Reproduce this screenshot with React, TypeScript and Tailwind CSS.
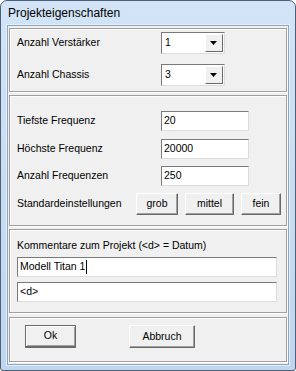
const font = { fontFamily: '"Liberation Sans", Arial, sans-serif' };

const Panel = ({ className, children }: { className: string; children: React.ReactNode }) => (
  <div
    className={
      "mx-px border border-[#a0a0a0] shadow-[inset_1px_1px_0_#ffffff,1px_1px_0_#ffffff] flex flex-col shrink-0 " +
      className
    }
  >
    {children}
  </div>
);

const Field = ({ value, className, caret }: { value: string; className: string; caret?: boolean }) => (
  <div
    className={
      "h-[20px] shrink-0 bg-white border border-t-[#7a7a7a] border-l-[#7a7a7a] border-r-[#dcdcdc] border-b-[#dcdcdc] flex items-center pl-[2px] text-black " +
      className
    }
  >
    {value}
    {caret && <span className="ml-px inline-block w-px h-[14px] bg-black" />}
  </div>
);

const Combo = ({ value }: { value: string }) => (
  <div className="w-[64px] h-[22px] bg-white border border-t-[#7a7a7a] border-l-[#7a7a7a] border-r-[#dcdcdc] border-b-[#dcdcdc] flex items-center">
    <span className="flex-1 pl-[3px]">{value}</span>
    <div className="w-[18px] h-[18px] mr-px bg-[#f0f0f0] border border-t-white border-l-white border-r-[#696969] border-b-[#696969] flex items-center justify-center">
      <svg width="8" height="4" viewBox="0 0 8 4">
        <path d="M0 0h7L3.5 4z" fill="#000" />
      </svg>
    </div>
  </div>
);

const Btn = ({ label, className, def }: { label: string; className: string; def?: boolean }) => (
  <div
    className={
      "flex items-center justify-center shrink-0 bg-[#f0f0f0] border " +
      (def
        ? "border-[#696969] border-b-2 shadow-[inset_1px_1px_0_#ffffff,inset_-1px_-1px_0_#a0a0a0] "
        : "border-t-white border-l-white border-r-[#696969] border-b-[#696969] shadow-[inset_-1px_-1px_0_#a0a0a0] ") +
      className
    }
  >
    {label}
  </div>
);

export default function App() {
  return (
    <div style={font} className="w-[296px] h-[371px] bg-white text-black text-[10.5px]">
      <div className="w-full h-full rounded-t-[7px] rounded-b-[3px] border border-[#4e5f78] bg-gradient-to-b from-[#d2e4f6] to-[#bed6ee] flex flex-col">
        <div className="h-[24px] shrink-0 pl-[7px] pt-[4px] text-[12px] leading-[16px]">Projekteigenschaften</div>
        <div className="mx-[6px] mb-[5px] flex-1 bg-[#f0f0f0] border border-[#8ea4bf] shadow-[0_0_0_1px_#e6eff9] flex flex-col pt-[2px] gap-[3px]">
          <Panel className="pt-[3px] pb-[5px] gap-[10px]">
            <div className="flex items-center h-[22px] pl-[7px]">
              <span className="w-[144px]">Anzahl Verstärker</span>
              <Combo value="1" />
            </div>
            <div className="flex items-center h-[22px] pl-[7px]">
              <span className="w-[144px]">Anzahl Chassis</span>
              <Combo value="3" />
            </div>
          </Panel>
          <Panel className="pt-[15px] pb-[10px] gap-[7px]">
            <div className="flex items-center pl-[7px]">
              <span className="w-[144px]">Tiefste Frequenz</span>
              <Field value="20" className="w-[88px]" />
            </div>
            <div className="flex items-center pl-[7px] mt-px">
              <span className="w-[144px]">Höchste Frequenz</span>
              <Field value="20000" className="w-[88px]" />
            </div>
            <div className="flex items-center pl-[7px]">
              <span className="w-[144px]">Anzahl Frequenzen</span>
              <Field value="250" className="w-[88px]" />
            </div>
            <div className="flex items-center pl-[7px] h-[22px]">
              <span className="w-[119px]">Standardeinstellungen</span>
              <Btn label="grob" className="w-[42px] h-[22px]" />
              <Btn label="mittel" className="w-[49px] h-[22px] ml-[7px]" />
              <Btn label="fein" className="w-[40px] h-[22px] ml-[7px]" />
            </div>
          </Panel>
          <Panel className="pt-[8px] pb-[10px] px-[7px]">
            <div className="h-[14px] leading-[14px]">Kommentare zum Projekt (&lt;d&gt; = Datum)</div>
            <Field value="Modell Titan 1" caret className="w-[260px] mt-[5px]" />
            <Field value="<d>" className="w-[260px] mt-[5px]" />
          </Panel>
          <Panel className="pt-[7px] pb-[13px] mt-px">
            <div className="flex items-center pl-[15px]">
              <Btn label="Ok" def className="w-[51px] h-[23px]" />
              <Btn label="Abbruch" className="w-[66px] h-[23px] ml-[53px]" />
            </div>
          </Panel>
        </div>
      </div>
    </div>
  );
}
